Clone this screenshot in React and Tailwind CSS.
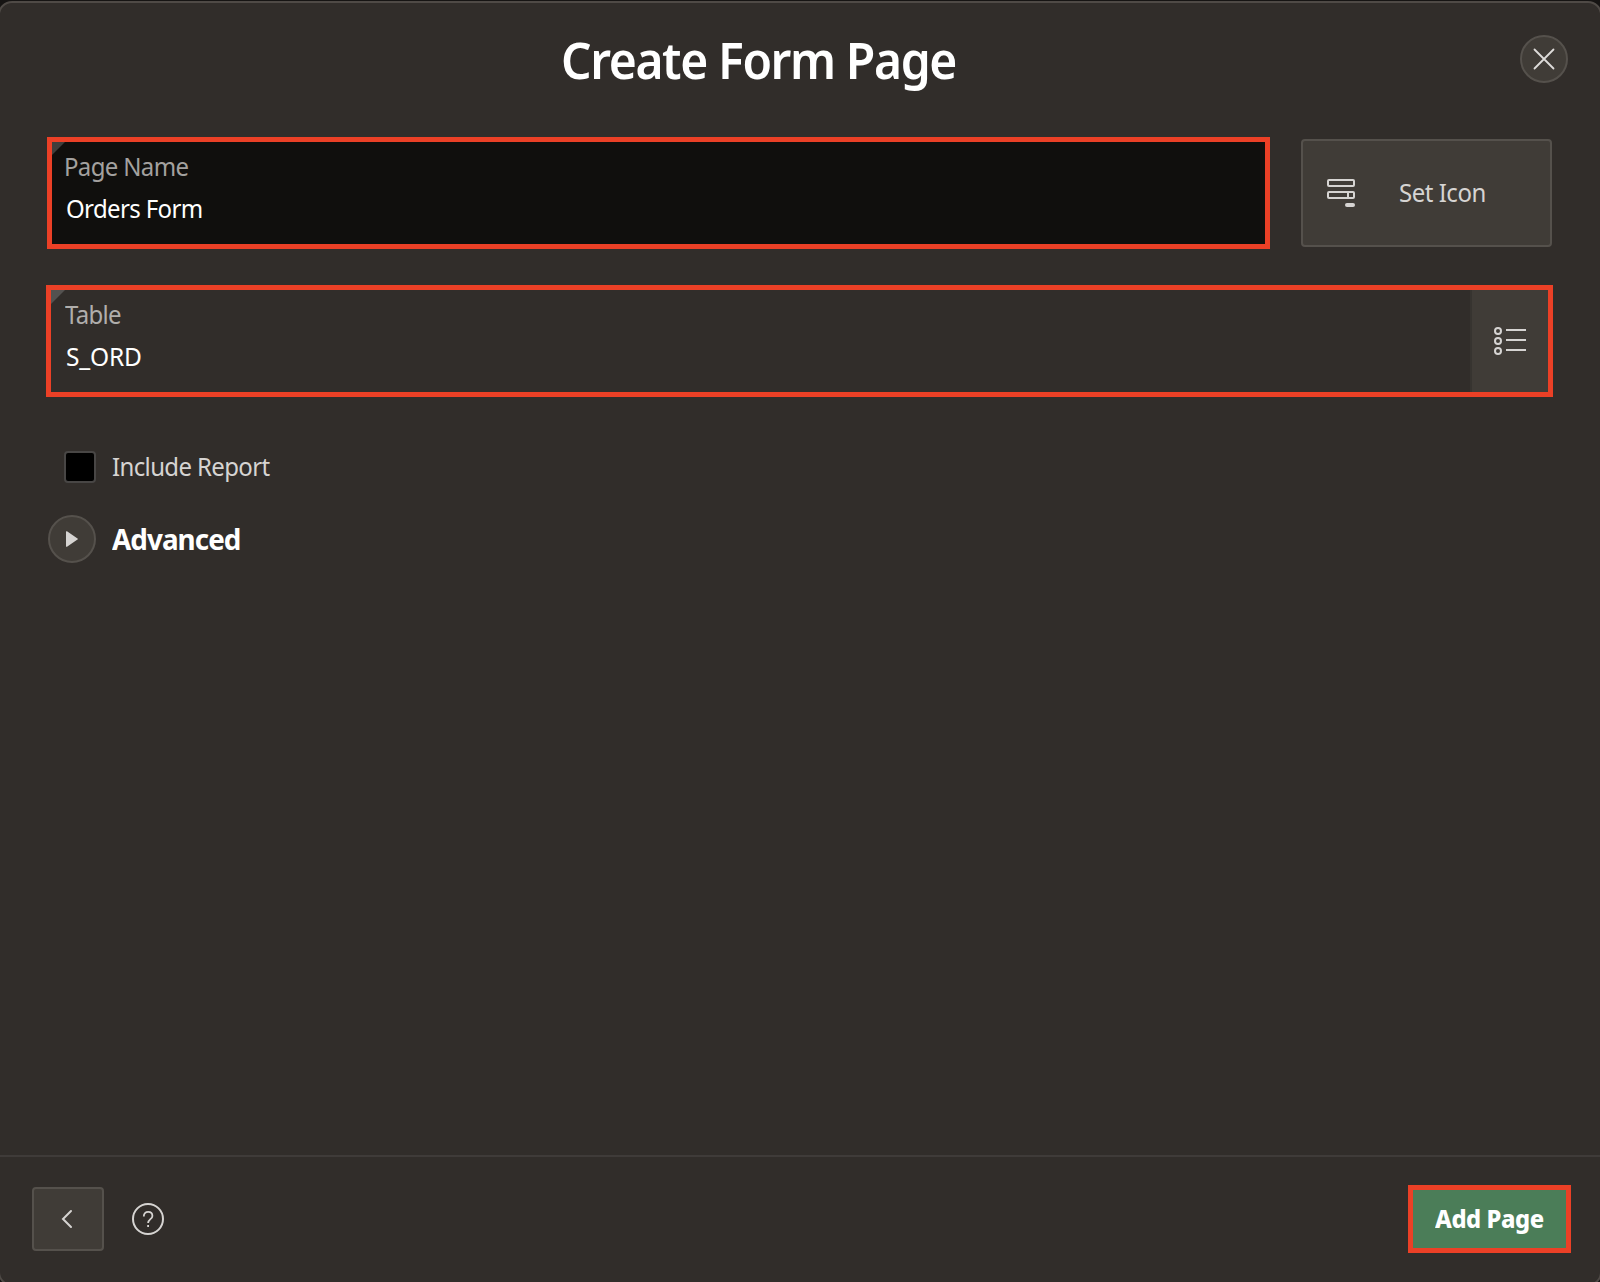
function Fit({ className = "", children }) {
  return <span className={"inline-block origin-left whitespace-nowrap " + className}>{children}</span>;
}

function Corner({ size, color }) {
  return (
    <svg className="absolute left-0 top-0" width={size} height={size} viewBox="0 0 10 10">
      <path d="M0 0H10L0 10Z" fill={color} />
    </svg>
  );
}

export default function App() {
  return (
    <div className="h-[1282px] w-[1600px] overflow-hidden bg-[#161413] pt-px font-['Noto_Sans',sans-serif] text-[#d6d4d2]">
      <div className="-mx-[2px] flex h-[1285px] w-[1604px] flex-col rounded-[14px] border-2 border-[#4f4a46] bg-[#312d2a]">
        <header className="flex h-[134px] shrink-0 justify-between pl-[561px] pr-[32px]">
          <h1 className="mt-[23px] h-[68px] text-[50px] font-[650] leading-[68px] text-white">
            <Fit className="scale-x-[.96] tracking-[-1.45px]">Create Form Page</Fit>
          </h1>
          <button className="mt-[32px] flex size-[48px] items-center justify-center rounded-full border-2 border-[#55514c] bg-[#403c37]">
            <svg width="24" height="24" viewBox="0 0 24 24" fill="none" stroke="#dedcda" strokeWidth="1.8" strokeLinecap="round">
              <path d="M2.500 2.500l19 19M21.500 2.500l-19 19" />
            </svg>
          </button>
        </header>

        <main className="flex grow flex-col pl-[46px] pr-[47px]">
          <div className="flex">
            <div className="relative ml-px h-[112px] w-[1223px] border-5 border-[#eb4026] bg-[#100f0d] pl-[12px] pt-[6px]">
              <Corner size={13} color="#3f3e3c" />
              <div className="h-[36px] text-[25px] leading-[36px] text-[#a3a19f]"><Fit className="scale-x-[.96] tracking-[-.68px]">Page Name</Fit></div>
              <div className="mt-[6px] h-[36px] pl-[2px] text-[25px] leading-[36px] text-white"><Fit className="scale-x-[.96] tracking-[-.66px]">Orders Form</Fit></div>
            </div>
            <button className="ml-[31px] mt-[2px] flex h-[108px] w-[251px] items-center rounded-[4px] border-2 border-[#55514c] bg-[#403c37] pl-[24px] text-[25px]">
              <svg width="28" height="28" viewBox="0 0 28 28" fill="none" stroke="#d6d4d2" strokeWidth="2">
                <rect x="1" y="1" width="26" height="6" rx="1" />
                <rect x="1" y="13" width="26" height="6" rx="1" />
                <path d="M21 13v6" />
                <rect x="18" y="24" width="10" height="4" rx="2" fill="#d6d4d2" stroke="none" />
              </svg>
              <Fit className="ml-[44px] scale-x-[.96] tracking-[-.5px]">Set Icon</Fit>
            </button>
          </div>

          <div className="relative mt-[36px] flex h-[112px] w-[1507px] shrink-0 border-5 border-[#eb4026]">
            <Corner size={14} color="#545250" />
            <div className="grow pl-[14px] pt-[6px]">
              <div className="h-[36px] text-[25px] leading-[36px] text-[#b0aeac]"><Fit className="scale-x-[.96] tracking-[-.72px]">Table</Fit></div>
              <div className="mt-[6px] h-[36px] pl-px text-[25px] leading-[36px] text-white"><Fit className="scale-x-[.98] tracking-[-.2px]">S_ORD</Fit></div>
            </div>
            <button className="flex w-[78px] items-center border-l-2 border-[#373430] bg-[#403c37] pl-[22px]">
              <svg width="32" height="28" viewBox="0 0 32 28" fill="none" stroke="#d6d4d2" strokeWidth="2">
                <circle cx="4" cy="4" r="3" />
                <circle cx="4" cy="14" r="3" />
                <circle cx="4" cy="24" r="3" />
                <path d="M12 3h20M12 13h20M12 23h20" />
              </svg>
            </button>
          </div>

          <label className="ml-[18px] mt-[54px] flex h-[32px] items-center text-[25px]">
            <span className="size-[32px] rounded-[4px] border-2 border-[#484645] bg-black" />
            <Fit className="ml-[16px] scale-x-[.96] tracking-[-.66px]">Include Report</Fit>
          </label>

          <div className="ml-[2px] mt-[32px] flex h-[48px] items-center">
            <button className="flex size-[48px] items-center justify-center rounded-full border-2 border-[#55514c] bg-[#403c37]">
              <svg width="12" height="16" viewBox="0 0 12 16" fill="#d6d4d2"><path d="M0 .8Q0-.2 1 .3L11.5 7.4Q12.4 8 11.5 8.600L1 15.700Q0 16.200 0 15.200Z" /></svg>
            </button>
            <h2 className="ml-[16px] text-[29px] font-bold text-white"><Fit className="scale-x-[.96] tracking-[-1px]">Advanced</Fit></h2>
          </div>
        </main>

        <footer className="flex h-[129px] shrink-0 items-start border-t-2 border-[#3f3b39] pl-[32px] pr-[29px]">
          <button className="mt-[30px] h-[64px] w-[72px] rounded-[4px] border-2 border-[#55514c] bg-[#403c37] pl-[27px]">
            <svg width="12" height="20" viewBox="0 0 12 20" fill="none" stroke="#d6d4d2" strokeWidth="2" strokeLinecap="round"><path d="M10 2L2 10L10 18" /></svg>
          </button>
          <svg className="ml-[28px] mt-[46px]" width="32" height="32" viewBox="0 0 32 32" fill="none" stroke="#d6d4d2" strokeWidth="2">
            <circle cx="16" cy="16" r="15" />
            <path strokeWidth="1.800" d="M11.800 13.500c0-3 1.700-4.600 4.400-4.600s4.200 1.600 4.200 4c0 3.300-4.300 3.200-4.300 7.200M16.100 22v2" />
          </svg>
          <button className="ml-auto mt-[28px] h-[68px] w-[163px] border-5 border-[#eb4026] bg-[#4b7d58] pl-[22px] text-left text-[25px] font-extrabold text-white">
            <Fit className="scale-x-[.95] tracking-[-.45px]">Add Page</Fit>
          </button>
        </footer>
      </div>
    </div>
  );
}
